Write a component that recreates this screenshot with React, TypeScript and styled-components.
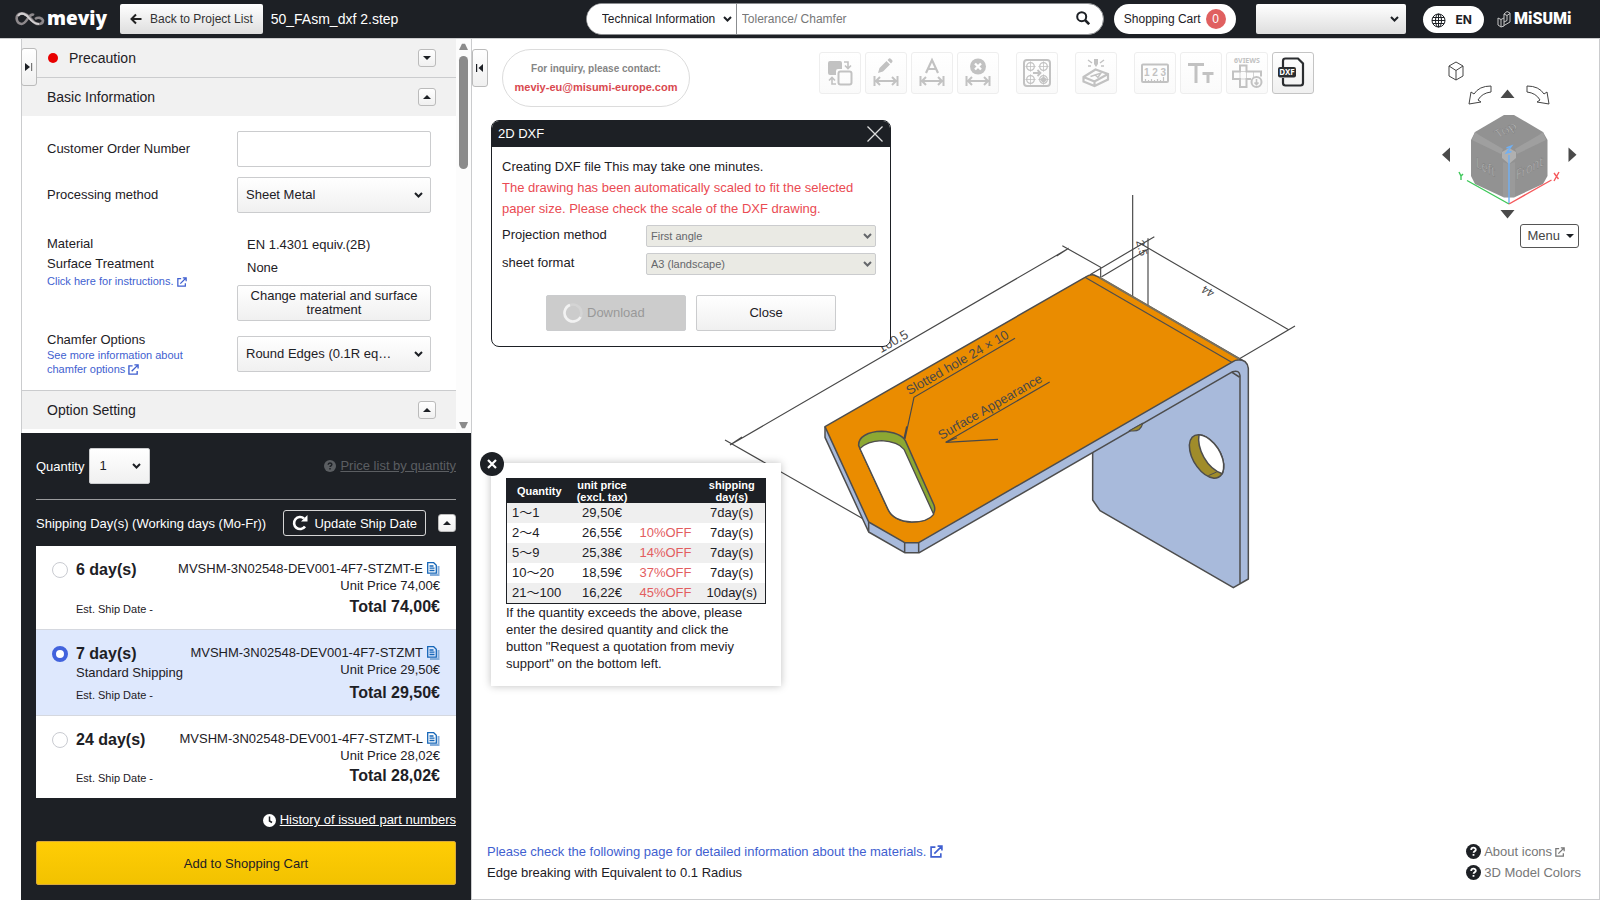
import React, { useState } from 'react';
import styled, { createGlobalStyle, css } from 'styled-components';

const dark = '#1d2025';
const line = '#cbccce';
const blue = '#3f5fd0';
const soft = 'linear-gradient(#ffffff, #f0f0f0)';

const GlobalStyle = createGlobalStyle`
  *, *::before, *::after { box-sizing: border-box; }
  body {
    margin: 0;
    background: #fff;
    color: ${dark};
    font: 13px/17px "Liberation Sans", Arial, "Noto Sans CJK JP", sans-serif;
  }
  button, input, select { font: inherit; color: inherit; margin: 0; }
  p { margin: 0; }
  svg { display: block; flex: none; }
`;

/* ---------- shared parts ---------- */

const Page = styled.div`
  display: flex;
  flex-direction: column;
  min-height: 100vh;
`;

const SelectBox = styled.span<{ $chevronRight?: number }>`
  position: relative;
  display: flex;
  > svg {
    position: absolute;
    right: ${(p) => p.$chevronRight ?? 8}px;
    top: 50%;
    margin-top: -4px;
    pointer-events: none;
  }
`;

const FieldSelect = styled.select<{ $height?: number }>`
  appearance: none;
  width: 100%;
  height: ${(p) => p.$height ?? 36}px;
  padding: 0 24px 1px 8px;
  border: 1px solid ${line};
  border-radius: 2px;
  background: ${soft};
`;

const PlainButton = styled.button`
  border: 1px solid ${line};
  border-radius: 2px;
  background: ${soft};
  height: 36px;
  padding: 0 8px;
  line-height: 14px;
  cursor: pointer;
`;

const Link = styled.a<{ $small?: boolean }>`
  color: ${blue};
  text-decoration: none;
  ${(p) => p.$small && css`font-size: 11px; line-height: 14px;`}
  svg { display: inline-block; vertical-align: -2px; }
`;

const Chevron = ({ color = dark }: { color?: string }) => (
  <svg width="9" height="8" viewBox="0 0 9 8">
    <path d="M1 2l3.5 3.5L8 2" fill="none" stroke={color} strokeWidth="2" />
  </svg>
);

const External = ({ size = 10 }: { size?: number }) => (
  <svg width={size} height={size} viewBox="0 0 12 12" fill="none" stroke="currentColor" strokeWidth="1.5">
    <path d="M5 2H1v9h9V7.500M4 8l6.500-6.500M7 1h4v4" />
  </svg>
);

const Triangle = ({ up }: { up?: boolean }) => (
  <svg width="8" height="4" viewBox="0 0 8 4">
    <path d={up ? 'M0 4h8L4 0z' : 'M0 0h8L4 4z'} fill={dark} />
  </svg>
);

/* ---------- header ---------- */

const Header = styled.header`
  display: flex;
  align-items: center;
  height: 38px;
  padding: 0 28px 0 15px;
  background: ${dark};
  color: #fff;
`;

const Meviy = styled.div`
  display: flex;
  align-items: center;
  gap: 2px;
  width: 90px;
  font: 800 19px/24px "Open Sans", sans-serif;
  height: 30px;
  span { padding-bottom: 3px; }
`;

const BackButton = styled.button`
  display: flex;
  align-items: center;
  gap: 8px;
  height: 30px;
  margin-left: 15px;
  padding: 0 10px;
  border: 0;
  border-radius: 2px;
  background: linear-gradient(#ffffff, #dedede);
  color: #333;
  font-size: 12px;
`;

const FileName = styled.span`
  margin-left: 8px;
  font-size: 14px;
`;

const HeaderRight = styled.div`
  display: flex;
  align-items: center;
  margin-left: auto;
`;

const Search = styled.form`
  display: flex;
  align-items: center;
  width: 518px;
  height: 32px;
  border: 1px solid #8b8d90;
  border-radius: 16px;
  background: #fff;
  color: ${dark};
  font-size: 12px;
  overflow: hidden;
  select {
    appearance: none;
    width: 150px;
    height: 30px;
    padding: 0 0 0 15px;
    border: 0;
    border-right: 1px solid #8b8d90;
    background: #fff;
  }
  input {
    flex: 1;
    min-width: 0;
    height: 30px;
    padding: 0 5px;
    border: 0;
    outline: 0;
    background: none;
  }
  input::placeholder { color: #777; opacity: 1; }
  button {
    border: 0;
    background: none;
    padding: 0 13px 2px 0;
  }
`;

const Cart = styled.a`
  display: flex;
  align-items: center;
  gap: 5px;
  height: 30px;
  margin-left: 10px;
  padding: 0 10px;
  border-radius: 15px;
  background: #fff;
  color: ${dark};
  font-size: 12px;
  text-decoration: none;
`;

const Badge = styled.span`
  width: 20px;
  border-radius: 10px;
  background: #e06060;
  color: #fff;
  line-height: 20px;
  text-align: center;
`;

const AccountSelect = styled.select`
  appearance: none;
  width: 150px;
  height: 30px;
  margin-left: 20px;
  border: 0;
  border-radius: 2px;
  background: linear-gradient(#ffffff, #dedede);
`;

const Language = styled.button`
  display: flex;
  align-items: center;
  gap: 10px;
  height: 27px;
  margin: 0 13px 0 17px;
  padding: 2px 12px 0 8px;
  border: 0;
  border-radius: 14px;
  background: #fff;
  color: ${dark};
  font: 700 12px/16px Inter, sans-serif;
`;

const Misumi = styled.div`
  display: flex;
  align-items: center;
  gap: 3px;
  width: 75px;
  font: 900 16px/20px Roboto, sans-serif;
`;

/* ---------- sidebar ---------- */

const Body = styled.div`
  display: flex;
  flex: 1;
  border-top: 1px solid ${line};
`;

const Sidebar = styled.aside`
  display: flex;
  flex-direction: column;
  flex: none;
  width: 450px;
  margin-left: 21px;
`;

const Settings = styled.div`
  position: relative;
  display: flex;
  flex: 1;
  border-left: 1px solid ${line};
`;

const Sections = styled.div`
  flex: 1;
`;

const SectionHead = styled.div<{ $line?: 'top' | 'bottom' }>`
  display: flex;
  align-items: center;
  height: ${(p) => (p.$line ? 39 : 38)}px;
  padding: 0 20px 0 25px;
  background: #f1f1f1;
  font-size: 14px;
  ${(p) => p.$line === 'top' && css`border-top: 1px solid ${line};`}
  ${(p) => p.$line === 'bottom' && css`border-bottom: 1px solid ${line};`}
`;

const Dot = styled.i`
  width: 10px;
  height: 10px;
  margin: 0 11px 0 1px;
  border-radius: 5px;
  background: #e80000;
`;

const Fold = styled.button`
  display: flex;
  align-items: center;
  justify-content: center;
  width: 18px;
  height: 18px;
  margin-left: auto;
  padding: 0;
  border: 1px solid #bbb;
  border-radius: 3px;
  background: ${soft};
`;

const PanelTab = styled.button<{ $over?: boolean }>`
  display: flex;
  align-items: center;
  justify-content: center;
  flex: none;
  width: 16px;
  height: 38px;
  padding: 0;
  border: 1px solid #bbb;
  border-radius: 3px;
  background: ${soft};
  ${(p) => p.$over && css`position: absolute; left: -1px; top: 9px;`}
`;

const Form = styled.form`
  display: grid;
  grid-template-columns: 190px 194px;
  row-gap: 10px;
  align-items: center;
  padding: 15px 25px 14px;
  > label { padding-bottom: 2px; }
`;

const TextField = styled.input`
  width: 100%;
  height: 36px;
  border: 1px solid ${line};
  border-radius: 2px;
  background: #fff;
`;

const Terms = styled.div`
  display: flex;
  flex-direction: column;
  align-self: start;
  margin-top: 11px;
  line-height: 20px;
`;

const Values = styled.div`
  display: flex;
  flex-direction: column;
  margin-top: 10px;
  line-height: 23px;
  span { padding-left: 10px; }
  button { margin-top: 6px; }
`;

const Chamfer = styled.div`
  display: flex;
  flex-direction: column;
  align-items: flex-start;
  width: 150px;
`;

const ScrollBar = styled.div`
  display: flex;
  flex-direction: column;
  align-items: center;
  justify-content: space-between;
  width: 15px;
  padding: 4px 0;
  background: #fcfcfc;
`;

const ScrollTop = styled.div`
  display: flex;
  flex-direction: column;
  align-items: center;
  gap: 6px;
  i { width: 9px; height: 113px; border-radius: 5px; background: #8b8b8b; }
`;

const Order = styled.section`
  display: flex;
  flex-direction: column;
  padding: 15px;
  background: ${dark};
  color: #fff;
`;

const QuantityRow = styled.div`
  display: flex;
  align-items: center;
  justify-content: space-between;
  padding-bottom: 15px;
  border-bottom: 1px solid #9a9b9d;
  label { display: flex; align-items: center; gap: 5px; }
  select { width: 61px; color: ${dark}; padding-left: 9px; }
`;

const IconLink = styled.a<{ $muted?: boolean }>`
  display: flex;
  align-items: center;
  gap: 4px;
  line-height: 18px;
  color: ${(p) => (p.$muted ? '#5b5e62' : '#fff')};
  text-decoration: none;
  span { text-decoration: underline; }
`;

const ShipRow = styled.div`
  display: flex;
  align-items: center;
  margin: 10px 0;
`;

const Update = styled.button`
  display: flex;
  align-items: center;
  gap: 6px;
  height: 26px;
  margin-left: auto;
  padding: 0 8px;
  border: 1px solid #d5d5d5;
  border-radius: 3px;
  background: none;
  color: #fff;
  & + button { margin-left: 12px; }
`;

const Plans = styled.div`
  background: #fff;
  color: ${dark};
`;

const Plan = styled.label<{ $on: boolean; $height: number }>`
  display: flex;
  min-height: ${(p) => p.$height}px;
  padding: 14px 16px 12px;
  border-bottom: 1px solid #d5d8df;
  background: ${(p) => (p.$on ? '#dee8fd' : '#fff')};
  &:last-child { border-bottom: 0; }
`;

const Radio = styled.input`
  appearance: none;
  flex: none;
  width: 16px;
  height: 16px;
  margin: 2px 8px 0 0;
  border: 1px solid #c9cbd1;
  border-radius: 8px;
  background: #fff;
  &:checked { border: 4px solid #4263dd; }
`;

const PlanSide = styled.span<{ $end?: boolean }>`
  display: flex;
  flex-direction: column;
  ${(p) => p.$end && css`margin-left: auto; align-items: flex-end;`}
  b { font-size: 16px; line-height: 20px; }
  b:last-child { margin-top: auto; }
`;

const Est = styled.small`
  margin: auto 0 1px;
  font-size: 11px;
  line-height: 14px;
`;

const PartNo = styled.span`
  display: flex;
  align-items: center;
  gap: 4px;
`;

const History = styled.div`
  display: flex;
  justify-content: flex-end;
  margin: 13px 0 12px;
`;

const AddButton = styled.button`
  height: 44px;
  border: 1px solid #d9a93b;
  border-radius: 2px;
  background: linear-gradient(#ffcd05, #f2c200);
  color: ${dark};
`;

/* ---------- viewer ---------- */

const Viewer = styled.main`
  position: relative;
  display: flex;
  flex-direction: column;
  justify-content: space-between;
  flex: 1;
  min-width: 0;
  border: 1px solid ${line};
  border-top: 0;
`;

const TopBar = styled.div`
  display: flex;
  align-items: flex-start;
  padding: 10px 20px 0 0;
`;

const Inquiry = styled.div`
  display: flex;
  flex-direction: column;
  align-items: center;
  justify-content: center;
  flex: none;
  width: 188px;
  height: 58px;
  margin-left: 14px;
  border: 1px solid #dcdcdc;
  border-radius: 29px;
  font-size: 10px;
  font-weight: 700;
  line-height: 18px;
  color: #858585;
  white-space: nowrap;
  a { color: #d9494f; font-size: 11px; text-decoration: none; }
`;

const Toolbar = styled.div`
  display: flex;
  gap: 17px;
  margin: 3px 0 0 129px;
`;

const ToolGroup = styled.div`
  display: flex;
  gap: 4px;
`;

const Tool = styled.button<{ $active?: boolean }>`
  width: 42px;
  height: 42px;
  padding: 0;
  border: 1px solid ${(p) => (p.$active ? '#c4c4c4' : '#eeeeee')};
  border-radius: 3px;
  background: ${(p) => (p.$active ? soft : 'linear-gradient(#ffffff, #fafafa)')};
  color: ${(p) => (p.$active ? '#2b2d30' : '#c2c2c2')};
`;

const Navigator = styled.div`
  display: flex;
  flex-direction: column;
  align-items: flex-end;
  gap: 4px;
  margin: 6px 0 0 auto;
`;

const MenuButton = styled.button`
  display: flex;
  align-items: center;
  gap: 6px;
  height: 24px;
  padding: 0 4px 1px 6px;
  border: 1px solid #555;
  border-radius: 3px;
  background: #fff;
  color: #444;
`;

const Model = styled.svg`
  position: absolute;
  left: 248px;
  top: 146px;
`;

const Dialog = styled.section`
  position: absolute;
  left: 19px;
  top: 81px;
  width: 400px;
  border: 1px solid ${dark};
  border-radius: 8px;
  background: #fff;
  overflow: hidden;
`;

const DialogHead = styled.div`
  display: flex;
  align-items: center;
  justify-content: space-between;
  height: 26px;
  padding: 0 7px 1px 6px;
  background: ${dark};
  color: #fff;
  button { padding: 0; border: 0; background: none; }
`;

const DialogBody = styled.div`
  padding: 9px 14px 15px 10px;
  line-height: 21px;
`;

const Warning = styled.p`
  color: #ea4b53;
`;

const Option = styled.label`
  display: grid;
  grid-template-columns: 144px 230px;
  height: 22px;
  margin: 6px 0;
  line-height: 20px;
  select {
    padding-left: 4px;
    background: #eaeae4;
    color: #65676b;
    font-size: 11px;
    opacity: 1;
  }
`;

const DialogActions = styled.div`
  display: flex;
  justify-content: center;
  gap: 10px;
  padding: 14px 0 0 4px;
  button { width: 140px; }
`;

const Download = styled(PlainButton)`
  display: flex;
  align-items: center;
  gap: 4px;
  padding-left: 16px;
  background: #cccccc;
  color: #999;
`;

const PricePopup = styled.section`
  position: absolute;
  left: 19px;
  top: 424px;
  width: 290px;
  padding: 15px 15px 14px;
  background: #fff;
  box-shadow: 0 0 8px rgba(0, 0, 0, 0.25);
`;

const RoundClose = styled.button`
  position: absolute;
  left: -11px;
  top: -11px;
  width: 24px;
  height: 24px;
  padding: 7px;
  border: 0;
  border-radius: 12px;
  background: ${dark};
`;

const Prices = styled.table`
  width: 259px;
  table-layout: fixed;
  border-collapse: collapse;
  border: 1px solid ${dark};
  th {
    height: 24px;
    padding: 0;
    background: ${dark};
    color: #fff;
    font-size: 11px;
    line-height: 12px;
  }
  td { height: 20px; padding: 0; line-height: 20px; text-align: center; }
  td:first-child { padding-left: 5px; text-align: left; }
  td:nth-child(3) { color: #e35d5f; }
  tbody tr:nth-child(odd) { background: #efefef; }
`;

const Footer = styled.footer`
  display: flex;
  justify-content: space-between;
  padding: 0 18px 16px 15px;
  line-height: 21px;
`;

const Help = styled.a`
  display: flex;
  align-items: center;
  gap: 3px;
  color: #777;
  text-decoration: none;
`;

/* ---------- drawings ---------- */

const MeviyMark = () => (
  <svg width="30" height="16" viewBox="0 0 30 16" fill="none">
    <path d="M19 4C14 1 12 13 6.500 13C0.500 12 0 4 5.500 2.500C12 1 16 9 20 12C24 14 28 13 28 9.500C27 6.500 23 6 20 8" stroke="#8d888b" strokeWidth="2.600" />
    <path d="M3 5C6 0 12 4 14 7C17 11 20 13 24 13" stroke="#d2cfd1" strokeWidth="2" />
  </svg>
);

const Question = ({ size = 15, bg = dark, fg = '#fff' }: { size?: number; bg?: string; fg?: string }) => (
  <svg width={size} height={size} viewBox="0 0 15 15">
    <circle cx="7.500" cy="7.500" r="7.500" fill={bg} />
    <path d="M5.200 6c0-3 4.600-3 4.600-.3 0 1.600-2.200 1.500-2.200 3.100M7.500 10v1.800" fill="none" stroke={fg} strokeWidth="1.800" />
  </svg>
);

const Copy = () => (
  <svg width="13" height="14" viewBox="0 0 13 14" fill="none">
    <path d="M3 13h8.500V4" stroke="#85aedb" strokeWidth="2" />
    <path d="M.7.700h6l2.600 2.500v8H.7zM2.500 4h4M2.500 6.200h5M2.500 8.500h5" stroke="#1566b8" strokeWidth="1.300" />
  </svg>
);

const Span = () => <path d="M9.500 24v10M32.500 24v10M11 29h20M15 25l-4 4 4 4M27 25l4 4-4 4" />;

const hole = (x: number, y: number) => (
  <g key={`${x}-${y}`} strokeWidth="1.300">
    <circle cx={x} cy={y} r="3.800" />
    <path d={`M${x - 5.2} ${y}h10.400M${x} ${y - 5.2}v10.400`} strokeWidth=".8" />
  </g>
);

const toolArt: Record<string, React.ReactNode> = {
  Swap: (
    <>
      <path d="M11 9h10q2 0 2 2v6h-4q-2 0-2 2v4h-6q-2 0-2-2V11q0-2 2-2z" fill="currentColor" stroke="none" />
      <rect x="19.500" y="19.500" width="13" height="13" rx="2" />
      <path d="M25 10h4v6M26 13.500l3 3 3-3M17 32h-4v-6M10 28.500l3-3 3 3" strokeWidth="1.600" />
    </>
  ),
  'Edit dimension': (
    <>
      <path d="M13 21l1.500-5 7-7 3.500 3.500-7 7zM22.500 8l1.500-1.500q1-.5 2 .5l1 1q1 1 .3 2L26 11.500z" fill="currentColor" stroke="none" />
      <Span />
    </>
  ),
  'Text dimension': <><path d="M15 21l6-13 6 13M17.500 17h7" strokeWidth="2.200" /><Span /></>,
  'Delete dimension': (
    <>
      <circle cx="21" cy="14.500" r="8" fill="currentColor" stroke="none" />
      <path d="M18 11.500l6 6M24 11.500l-6 6" stroke="#fff" strokeWidth="2.400" />
      <Span />
    </>
  ),
  'Hole group': (
    <>
      <rect x="8" y="8" width="26" height="26" rx="3" />
      {[hole(14.5, 14.5), hole(27.5, 14.5), hole(14.5, 27.5), hole(27.5, 27.5)]}
      <circle cx="27.500" cy="27.500" r="1.600" fill="currentColor" />
      <path d="M17 21h7M21.500 18l3 3-3 3" strokeWidth="1.800" />
    </>
  ),
  Marking: (
    <>
      <path d="M8.500 25l12-7.500 12.500 4.500v5.500l-13.500 6.500-11-4.500zM8.500 25l11 4.500L33 22M19.500 29.500V34" strokeWidth="2.200" />
      <path d="M15.500 24.500l10.500-3.500-3.500 5M19.500 22.500l3 2.500" strokeWidth="1.400" />
      <path d="M19 7h4v5l-2 3-2-3z" fill="currentColor" stroke="none" />
      <path d="M13 8l4 3M29 8l-4 3M13 14h3M26 14h3" strokeWidth="1.400" />
    </>
  ),
  Measure: (
    <>
      <rect x="8" y="12.500" width="26" height="17.500" rx="1" />
      <text x="21" y="23.500" textAnchor="middle" fontFamily="Liberation Sans" fontWeight="700" fontSize="10" fill="currentColor" stroke="none">1 2 3</text>
      <path d="M11.500 30v-3M14.500 30v-2M17.500 30v-3M20.500 30v-2M23.500 30v-3M26.500 30v-2M29.500 30v-5" strokeWidth="1.200" />
    </>
  ),
  'Text size': <path d="M8 12.500h16M16 12.500V31M22.500 21.500h11M28 21.500V31" strokeWidth="3" />,
  'Six views': (
    <>
      <text x="21" y="11" textAnchor="middle" fontFamily="Noto Sans" fontWeight="700" fontSize="7" fill="currentColor" stroke="none">6VIEWS</text>
      <path d="M25 27h-4.500v8H14v-8H7v-7.500h7v-6h6.500v6H35v5" strokeWidth="2" />
      <path d="M14 19.500h6.500V27H14zM27.500 19.500v6" strokeWidth=".7" />
      <circle cx="30.500" cy="30" r="5" />
      <path d="M30.500 27v5M28.500 30.500l2 2 2-2" strokeWidth="1.600" />
    </>
  ),
  DXF: (
    <>
      <path d="M11 15V9q0-2.500 2.500-2.500H26l5 5V31q0 2.500-2.500 2.500h-15Q11 33.500 11 31v-5" strokeWidth="2.200" />
      <rect x="6" y="15" width="18" height="10.500" rx="2" fill="currentColor" stroke="none" />
      <text x="15" y="23" textAnchor="middle" fontFamily="Noto Sans" fontWeight="700" fontSize="8" fill="#fff" stroke="none">DXF</text>
    </>
  ),
};

const toolGroups = [
  ['Swap', 'Edit dimension', 'Text dimension', 'Delete dimension'],
  ['Hole group'],
  ['Marking'],
  ['Measure', 'Text size', 'Six views', 'DXF'],
];

const ViewCube = () => (
  <svg width="139" height="165" viewBox="1440 55 139 165" role="img" aria-label="View cube">
    <path d="M1456 62l7 4v10l-7 4-7-4V66zM1449 66l7 4.500 7-4.500M1456 70.500V80" fill="none" stroke="#444" />
    <path d="M1491 86v6q-9 1-13 8l3 2-12 2 2-12 3 2q5-8 17-8z" fill="#fff" stroke="#444" />
    <path d="M1527 86v6q9 1 13 8l-3 2 12 2-2-12-3 2q-5-8-17-8z" fill="#fff" stroke="#444" />
    <path d="M1500.500 98h14l-7-8.500zM1500.500 210h14l-7 8.500zM1450 147.500v14.500l-8-7.200zM1568.500 147.500v14.500l8-7.200z" fill="#4a4a4a" />
    <path d="M1504 115h10l29 17 4.500 8v36l-4.500 8-29 13.500h-10L1475 184l-4-8v-36l4-8z" fill="#929292" />
    <path d="M1475 132l4 3 24 14-2 5-29-14zM1543 132l-4 3-24 14 2 5 29-14z" fill="#9f9f9f" />
    <path d="M1503 162l6 2 6-2v35h-12z" fill="#9a9a9a" />
    <path d="M1502 152l7-4 7 4v6l-7 6-7-6z" fill="#b0b0b0" />
    <g fontFamily="Noto Sans" fontSize="14" fill="#c0c0c0" stroke="#707070" strokeWidth=".4">
      <text transform="matrix(.84 -.42 .5 .66 1498 138)">Top</text>
      <text transform="matrix(.76 .4 0 1 1476 167)">Left</text>
      <text transform="matrix(.78 -.42 0 1 1516 180)">Front</text>
    </g>
    <path d="M1509 204V155" stroke="#6fb0f5" strokeWidth="1.400" />
    <path d="M1506.500 148l5-2-5 7 5-1.500" fill="none" stroke="#6fb0f5" strokeWidth="1.400" />
    <path d="M1509 204l-42-23.500M1459 172l2 4 2-2M1461 176v4" fill="none" stroke="#3ec85a" strokeWidth="1.400" />
    <path d="M1509 204l42.500-24M1554 173l4.500 6M1559 172l-5 9" fill="none" stroke="#f5595c" strokeWidth="1.400" />
  </svg>
);

const Bracket = () => (
  <Model width="590" height="420" viewBox="-240 15 1770 1260" role="img" aria-label="Sheet metal bracket">
    <g fill="none" stroke="#484848" strokeWidth="3.500">
      <path d="M-210 795L806 205M770 228L806 205M-225 780L206 1026M-210 795l36-24M787 197l115 65v30M870 284l193-114M905 290l140-83" />
      <path d="M998 45v305M1044 175v205M1020 190l447 260M1485 438L1312 540" />
    </g>
    <g stroke="#4d4d4d" strokeWidth="4.500" strokeLinejoin="round">
      <path d="M878 815V960l22 32 400 231 45-26V565q-3-26-33-27L1000 720z" fill="#a8badb" />
      <path d="M75 740v32l131 284 108 62h44L1298 575l14-37L356 1060z" fill="#a8badb" stroke="none" />
      <path d="M75 740v32l131 284 108 62h44L1298 575q20-6 22 12v623M206 1026v30M314 1088v30M356 1088v30M1296 577l22 14" fill="none" />
      <path d="M75 740L855 292q15-10 27-7l16 7 427 248q-16-3-30 7L356 1088h-42l-108-62z" fill="#ea8c00" />
      <path d="M855 292l440 255" fill="none" strokeWidth="3.500" />
      <path d="M898 292l420 245" fill="none" stroke="#7a715d" strokeWidth="6" />
      <path d="M176 797C174 770 205 755 245 754C285 756 306 765 316 782L402 975C412 1003 385 1026 335 1026C298 1024 274 1010 264 988Z" fill="#8ca833" />
      <path d="M180 806C195 790 220 783 245 782C275 784 300 792 312 808L401 1003C390 1018 368 1026 335 1026C298 1024 274 1010 264 988Z" fill="#fff" strokeWidth="4" />
      <path d="M1197 764C1225 765 1265 805 1271 852C1273 880 1262 894 1242 895C1205 890 1168 840 1168 795C1169 775 1180 763 1197 764Z" fill="#a08c2a" />
      <path d="M1197 764C1225 765 1265 805 1271 852C1272 865 1270 874 1267 881C1220 865 1190 805 1197 764Z" fill="#fff" />
      <path d="M1225 887l25-11" strokeWidth="3" />
      <path d="M988 752q34 6 40-22z" fill="#a08c2a" strokeWidth="3.500" />
    </g>
    <g fill="none" stroke="#484848" strokeWidth="3.500">
      <path d="M645 475L342 652l-27 125M312 775l8-36M749 606L437 787l157-9M437 787l34-14" />
    </g>
    <g fontFamily="Liberation Sans" fontSize="39" fill="#484848">
      <text transform="translate(328 646) rotate(-30)">Slotted hole 24 × 10</text>
      <text transform="translate(424 780) rotate(-30)">Surface Appearance</text>
      <text transform="translate(243 520) rotate(-30)">100.5</text>
      <text transform="translate(1246 334) rotate(210)" fontSize="34">44</text>
      <text transform="translate(1008 184) rotate(75)" fontSize="34">2.5</text>
    </g>
  </Model>
);

/* ---------- data ---------- */

const plans = [
  { days: '6 day(s)', part: 'MVSHM-3N02548-DEV001-4F7-STZMT-E', price: '74,00€', height: 84 },
  { days: '7 day(s)', note: 'Standard Shipping', part: 'MVSHM-3N02548-DEV001-4F7-STZMT', price: '29,50€', height: 86 },
  { days: '24 day(s)', part: 'MVSHM-3N02548-DEV001-4F7-STZMT-L', price: '28,02€', height: 82 },
];

const prices = [
  ['1～1', '29,50€', '', '7day(s)'],
  ['2～4', '26,55€', '10%OFF', '7day(s)'],
  ['5～9', '25,38€', '14%OFF', '7day(s)'],
  ['10～20', '18,59€', '37%OFF', '7day(s)'],
  ['21～100', '16,22€', '45%OFF', '10day(s)'],
];

/* ---------- page ---------- */

export default function App() {
  const [plan, setPlan] = useState(1);

  return (
    <Page>
      <GlobalStyle />
      <Header>
        <Meviy><MeviyMark /><span>meviy</span></Meviy>
        <BackButton>
          <svg width="12" height="12" viewBox="0 0 12 12" fill="none" stroke="#222" strokeWidth="2">
            <path d="M11.500 6H2M6 1.500L1.500 6 6 10.500" />
          </svg>
          Back to Project List
        </BackButton>
        <FileName>50_FAsm_dxf 2.step</FileName>
        <HeaderRight>
          <Search onSubmit={(e) => e.preventDefault()}>
            <SelectBox $chevronRight={5}>
              <select aria-label="Search category"><option>Technical Information</option></select>
              <Chevron />
            </SelectBox>
            <input aria-label="Search" placeholder="Tolerance/ Chamfer" />
            <button aria-label="Run search">
              <svg width="14" height="14" viewBox="0 0 14 14" fill="none" stroke={dark} strokeWidth="2">
                <circle cx="5.700" cy="5.700" r="4.500" /><path d="M9 9l4.200 4.200" strokeWidth="2.600" />
              </svg>
            </button>
          </Search>
          <Cart href="#cart">Shopping Cart <Badge>0</Badge></Cart>
          <SelectBox $chevronRight={7}>
            <AccountSelect aria-label="Account"><option> </option></AccountSelect>
            <Chevron />
          </SelectBox>
          <Language>
            <svg width="15" height="15" viewBox="0 0 15 15" fill="none" stroke={dark}>
              <circle cx="7.500" cy="7.500" r="6.500" /><ellipse cx="7.500" cy="7.500" rx="3" ry="6.500" />
              <path d="M7.500 1v13M1 7.500h13M2 4.500h11M2 10.500h11" />
            </svg>
            EN
          </Language>
          <Misumi>
            <svg width="14" height="18" viewBox="0 0 14 18" fill="none" stroke="#c8c8c8">
              <path d="M1 8l3 1.500 3-1.500v8l-3 1-3-2zM4 9.500V17M7 4l3-2.500 3 1.500v9l-6 3.500M7 4l3 1.500 3-2M10 5.500v5l-3 1.500M7 4v4" />
            </svg>
            MiSUMi
          </Misumi>
        </HeaderRight>
      </Header>

      <Body>
        <Sidebar>
          <Settings>
            <Sections>
              <SectionHead $line="bottom"><Dot />Precaution<Fold aria-label="Expand"><Triangle /></Fold></SectionHead>
              <SectionHead>Basic Information<Fold aria-label="Collapse"><Triangle up /></Fold></SectionHead>
              <Form onSubmit={(e) => e.preventDefault()}>
                <label htmlFor="order">Customer Order Number</label>
                <TextField id="order" />
                <label htmlFor="process">Processing method</label>
                <SelectBox>
                  <FieldSelect id="process"><option>Sheet Metal</option></FieldSelect>
                  <Chevron />
                </SelectBox>
                <Terms>
                  <span>Material</span>
                  <span>Surface Treatment</span>
                  <Link $small href="#treatment">Click here for instructions. <External /></Link>
                </Terms>
                <Values>
                  <span>EN 1.4301 equiv.(2B)</span>
                  <span>None</span>
                  <PlainButton type="button">Change material and surface treatment</PlainButton>
                </Values>
                <Chamfer>
                  <label htmlFor="chamfer">Chamfer Options</label>
                  <Link $small href="#chamfer">See more information about chamfer options <External size={11} /></Link>
                </Chamfer>
                <SelectBox>
                  <FieldSelect id="chamfer"><option>Round Edges (0.1R eq…</option></FieldSelect>
                  <Chevron />
                </SelectBox>
              </Form>
              <SectionHead $line="top">Option Setting<Fold aria-label="Collapse"><Triangle up /></Fold></SectionHead>
            </Sections>
            <ScrollBar>
              <ScrollTop>
                <svg width="9" height="7" viewBox="0 0 9 7"><path d="M0 7h9L6 .8H3z" fill="#8b8b8b" /></svg>
                <i />
              </ScrollTop>
              <svg width="9" height="7" viewBox="0 0 9 7"><path d="M0 0h9L6 6.200H3z" fill="#8b8b8b" /></svg>
            </ScrollBar>
            <PanelTab $over aria-label="Expand panel">
              <svg width="8" height="8" viewBox="0 0 8 8"><path d="M0 0l5 4-5 4z" fill={dark} /><path d="M6 0h1.200v8H6z" fill="#777" /></svg>
            </PanelTab>
          </Settings>

          <Order>
            <QuantityRow>
              <label>
                Quantity
                <SelectBox $chevronRight={9}>
                  <FieldSelect><option>1</option></FieldSelect>
                  <Chevron />
                </SelectBox>
              </label>
              <IconLink $muted href="#prices"><Question size={12} bg="#5b5e62" fg={dark} /><span>Price list by quantity</span></IconLink>
            </QuantityRow>
            <ShipRow>
              Shipping Day(s) (Working days (Mo-Fr))
              <Update>
                <svg width="16" height="16" viewBox="0 0 16 16" fill="none" stroke="#fff" strokeWidth="2.600">
                  <path d="M13 11.500A6 6 0 1 1 12 3.500" /><path d="M15.500 0v6.500H9z" fill="#fff" stroke="none" />
                </svg>
                Update Ship Date
              </Update>
              <Fold aria-label="Collapse"><Triangle up /></Fold>
            </ShipRow>
            <Plans>
              {plans.map((p, i) => (
                <Plan key={p.part} $on={plan === i} $height={p.height}>
                  <Radio type="radio" name="plan" checked={plan === i} onChange={() => setPlan(i)} />
                  <PlanSide>
                    <b>{p.days}</b>
                    {p.note && <span>{p.note}</span>}
                    <Est>Est. Ship Date -</Est>
                  </PlanSide>
                  <PlanSide $end>
                    <PartNo>{p.part}<Copy /></PartNo>
                    <span>Unit Price {p.price}</span>
                    <b>Total {p.price}</b>
                  </PlanSide>
                </Plan>
              ))}
            </Plans>
            <History>
              <IconLink href="#history">
                <svg width="13" height="13" viewBox="0 0 13 13">
                  <circle cx="6.500" cy="6.500" r="6.500" fill="#fff" /><path d="M6.500 2.500v4.500l2.500 1.500" fill="none" stroke={dark} strokeWidth="1.500" />
                </svg>
                <span>History of issued part numbers</span>
              </IconLink>
            </History>
            <AddButton>Add to Shopping Cart</AddButton>
          </Order>
        </Sidebar>

        <Viewer>
          <Bracket />
          <TopBar>
            <PanelTab aria-label="Collapse panel">
              <svg width="8" height="8" viewBox="0 0 8 8"><path d="M7 0v8L2.500 4zM0 0h1.200v8H0z" fill={dark} /></svg>
            </PanelTab>
            <Inquiry>
              <span>For inquiry, please contact:</span>
              <a href="mailto:meviy-eu@misumi-europe.com">meviy-eu@misumi-europe.com</a>
            </Inquiry>
            <Toolbar>
              {toolGroups.map((group) => (
                <ToolGroup key={group[0]}>
                  {group.map((name) => (
                    <Tool key={name} aria-label={name} $active={name === 'DXF'}>
                      <svg width="40" height="40" viewBox="1 1 40 40" fill="none" stroke="currentColor" strokeWidth="2">{toolArt[name]}</svg>
                    </Tool>
                  ))}
                </ToolGroup>
              ))}
            </Toolbar>
            <Navigator>
              <ViewCube />
              <MenuButton>Menu <Triangle /></MenuButton>
            </Navigator>
          </TopBar>

          <Dialog role="dialog" aria-label="2D DXF">
            <DialogHead>
              2D DXF
              <button aria-label="Close dialog">
                <svg width="16" height="16" viewBox="0 0 16 16" stroke="#ddd" strokeWidth="1.300"><path d="M.5.500l15 15M15.500.500l-15 15" /></svg>
              </button>
            </DialogHead>
            <DialogBody>
              <p>Creating DXF file This may take one minutes.</p>
              <Warning>The drawing has been automatically scaled to fit the selected paper size. Please check the scale of the DXF drawing.</Warning>
              <Option>
                Projection method
                <SelectBox $chevronRight={4}>
                  <FieldSelect $height={22} disabled><option>First angle</option></FieldSelect>
                  <Chevron color="#65676b" />
                </SelectBox>
              </Option>
              <Option>
                sheet format
                <SelectBox $chevronRight={4}>
                  <FieldSelect $height={22} disabled><option>A3 (landscape)</option></FieldSelect>
                  <Chevron color="#65676b" />
                </SelectBox>
              </Option>
              <DialogActions>
                <Download disabled>
                  <svg width="20" height="20" viewBox="0 0 20 20" fill="none" strokeWidth="2.600">
                    <circle cx="10" cy="10" r="8.500" stroke="#d4d4d4" />
                    <path d="M7 2A8.500 8.500 0 1 0 17.500 14" stroke="#f2f2f2" />
                  </svg>
                  Download
                </Download>
                <PlainButton>Close</PlainButton>
              </DialogActions>
            </DialogBody>
          </Dialog>

          <PricePopup>
            <RoundClose aria-label="Close price list">
              <svg width="10" height="10" viewBox="0 0 10 10" stroke="#fff" strokeWidth="2.200"><path d="M1 1l8 8M9 1L1 9" /></svg>
            </RoundClose>
            <Prices>
              <colgroup><col width="65" /><col width="61" /><col width="66" /><col width="67" /></colgroup>
              <thead>
                <tr><th>Quantity</th><th>unit price (excl. tax)</th><th /><th>shipping day(s)</th></tr>
              </thead>
              <tbody>
                {prices.map((row) => (
                  <tr key={row[0]}>{row.map((cell, i) => <td key={i}>{cell}</td>)}</tr>
                ))}
              </tbody>
            </Prices>
            <p>If the quantity exceeds the above, please enter the desired quantity and click the button "Request a quotation from meviy support" on the bottom left.</p>
          </PricePopup>

          <Footer>
            <div>
              <Link href="#materials">Please check the following page for detailed information about the materials. <External size={13} /></Link>
              <p>Edge breaking with Equivalent to 0.1 Radius</p>
            </div>
            <div>
              <Help href="#icons"><Question />About icons <External size={10} /></Help>
              <Help href="#colors"><Question />3D Model Colors</Help>
            </div>
          </Footer>
        </Viewer>
      </Body>
    </Page>
  );
}
